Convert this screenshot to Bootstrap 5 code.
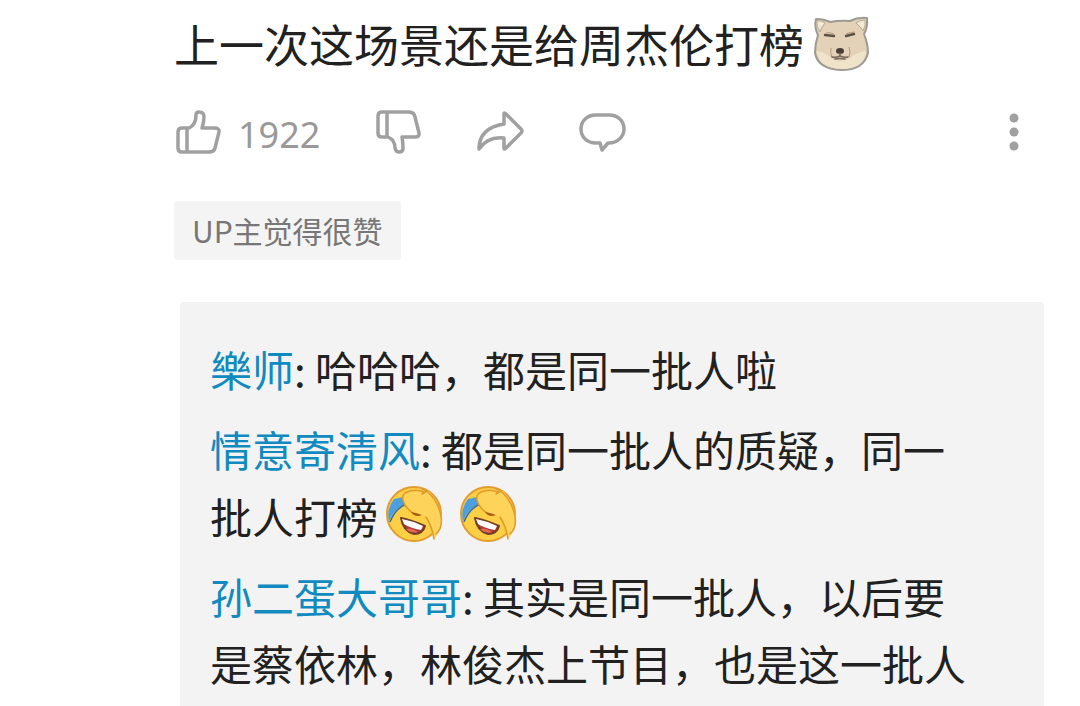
<!DOCTYPE html>
<html lang="zh-CN">
<head>
<meta charset="utf-8">
<meta name="viewport" content="width=device-width, initial-scale=1">
<title>评论</title>
<link href="https://cdn.jsdelivr.net/npm/bootstrap@5.3.0/dist/css/bootstrap.min.css" rel="stylesheet">
<style>
  body { font-family: "Noto Sans CJK SC", sans-serif; color: #212121; background: #fff; }
  .comment { padding: 10px 36px 0 174px; }
  .comment-text { font-size: 45px; line-height: 68px; }
  .face { width: 58px; height: 58px; margin: 0 8px; vertical-align: -10px; }
  .actions { margin-top: 26px; height: 56px; gap: 54px; }
  .actions button { color: #999; line-height: 56px; }
  .actions svg { display: block; width: 48px; height: 48px; fill: none; stroke: #a0a0a0; stroke-width: 3.5; stroke-linejoin: round; stroke-linecap: round; }
  .like-count { font-family: "Noto Sans", "Noto Sans CJK SC", sans-serif; font-size: 36px; margin-left: 16px; padding-top: 5px; }
  .actions .more { width: 12px; fill: #a0a0a0; stroke: none; }
  .up-tag { margin-top: 41px; padding: 0 18px; font-size: 30px; line-height: 59px; color: #777; background: #f4f4f4; border-radius: 3px; }
  .replies { margin: 42px 0 0 6px; padding: 33px 62px 0 30px; background: #f3f3f3; border-radius: 4px 4px 0 0; font-size: 42px; line-height: 67px; }
  .reply { margin-bottom: 13px; }
  .reply:last-child { margin-bottom: 0; }
  .reply a { color: #118ac0; }
</style>
</head>
<body>
<svg class="d-none" aria-hidden="true">
  <symbol id="laugh" viewBox="0 0 58 58">
    <circle cx="28" cy="28" r="27" fill="#fccf45" stroke="#e39c30" stroke-width="2"/>
    <path d="M8 13L17 11L19 18Q9 22 3 35Q0 23 8 13Z" fill="#4d9fe0"/>
    <path d="M4 36Q9 23 20 18" fill="none" stroke="#33709f" stroke-width="1.5"/>
    <path d="M19 7Q30 0 43 5Q52 15 56 30Q57 42 48 53Q46 42 39 30Q32 28 27 27Q19 22 17 14Q16 9 19 7Z" fill="#fdd35a"/>
    <path d="M27 27Q19 22 17 14Q16 9 19 7Q28 2 38 6M36 3L41 5L36 8M41 5Q52 15 55 30Q57 42 50 48M40 31Q46 40 48 53" fill="none" stroke="#e09a28" stroke-width="1.5" stroke-linecap="round" stroke-linejoin="round"/>
    <path d="M25 26Q31 27 36 29Q29 32 25 26Z" fill="#a95a17"/>
    <path d="M15 32Q25 34 39 40Q37 48 28 48Q17 45 15 32Z" fill="#b53830" stroke="#714026" stroke-width="2" stroke-linejoin="round"/>
    <path d="M16 33Q27 35 37 40L35 44Q24 42 18 38Z" fill="#fff"/>
    <path d="M20 43Q26 41 32 46Q25 48 20 43Z" fill="#e4685a"/>
  </symbol>
</svg>
<main class="comment min-vh-100 d-flex flex-column">
  <p class="comment-text mb-0">上一次这场景还是给周杰伦打榜<svg class="face" viewBox="0 0 58 58" role="img" aria-label="狗头">
      <path d="M4 4Q12 4 18 7Q28 5 38 6Q46 2 55 3Q56 12 52 19Q56 29 56 38Q52 55 29 55Q6 54 3 38Q3 29 6 20Q2 12 4 4Z" fill="#e3d1b8" stroke="#9c9a92" stroke-width="2" stroke-linejoin="round"/>
      <path d="M5 6Q9 5 13 8Q9 13 8 17Q4 11 5 6ZM53 5Q48 5 44 8Q49 12 51 16Q54 11 53 5Z" fill="#f4ead3" stroke="#b7aa92" stroke-width="1"/>
      <path d="M5 36Q14 37 20 44Q28 48 37 44Q44 37 54 36Q53 54 29 54Q6 53 5 36Z" fill="#efe3ca"/>
      <path d="M13 20L22 21M34 21L42 19" fill="none" stroke="#5b5044" stroke-width="2.5" stroke-linecap="round"/>
      <path d="M14 18Q18 17 22 19M34 19Q38 17 43 17M19 33Q18 38 20 42M37 32Q39 37 37 42" fill="none" stroke="#b09a7c" stroke-width="1"/>
      <ellipse cx="28" cy="36" rx="4" ry="3" fill="#493b35"/>
      <path d="M28 38V41M20 42Q24 43 28 41Q33 43 36 42M23 44Q28 43 33 44" fill="none" stroke="#75645a" stroke-width="1.5" stroke-linecap="round"/>
    </svg></p>

  <div class="actions d-flex align-items-center">
    <button type="button" class="btn p-0 border-0 d-flex align-items-center" aria-label="点赞 1922">
      <svg viewBox="0 0 48 48"><path d="M8 20H15Q22 17 22 7Q22 4 25 4Q30 4 30 9Q30 14 28 20H40Q46 20 45 24L41 40Q40 44 35 44H8Q4 44 4 40V24Q4 20 8 20ZM13 20V44"/></svg>
      <span class="like-count">1922</span>
    </button>
    <button type="button" class="btn p-0 border-0" aria-label="点踩">
      <svg viewBox="0 0 48 48"><path d="M8 4H35Q40 4 41 9L45 25Q46 29 41 29H28Q29 34 29 40Q29 44 25 44Q22 44 21 40Q21 32 14 29H8Q4 29 4 25V8Q4 4 8 4ZM13 4V29"/></svg>
    </button>
    <button type="button" class="btn p-0 border-0" aria-label="分享">
      <svg viewBox="0 0 48 48"><path d="M28 6Q28 4 30 6L45 21Q47 23 45 25L30 40Q28 42 28 40V30Q12 28 3 41Q3 20 28 16Z"/></svg>
    </button>
    <button type="button" class="btn p-0 border-0" aria-label="回复">
      <svg viewBox="0 0 48 48"><path d="M18 7H31C40 7 46 13 46 21C46 29 39 35 31 35H30L24 42L22 35H18C9 35 3 29 3 21C3 13 9 7 18 7Z"/></svg>
    </button>
    <button type="button" class="btn p-0 border-0 ms-auto me-4" aria-label="更多">
      <svg class="more" viewBox="0 0 12 48"><circle cx="6" cy="10" r="4.5"/><circle cx="6" cy="24" r="4.5"/><circle cx="6" cy="38" r="4.5"/></svg>
    </button>
  </div>

  <div class="up-tag align-self-start">UP主觉得很赞</div>

  <section class="replies flex-grow-1">
    <p class="reply"><a href="#" class="text-decoration-none">樂师</a>: 哈哈哈，都是同一批人啦</p>
    <p class="reply"><a href="#" class="text-decoration-none">情意寄清风</a>: 都是同一批人的质疑，同一批人打榜<svg class="face" role="img" aria-label="笑哭"><use href="#laugh"/></svg><svg class="face" role="img" aria-label="笑哭"><use href="#laugh"/></svg></p>
    <p class="reply"><a href="#" class="text-decoration-none">孙二蛋大哥哥</a>: 其实是同一批人，以后要是蔡依林，林俊杰上节目，也是这一批人</p>
  </section>
</main>
</body>
</html>
